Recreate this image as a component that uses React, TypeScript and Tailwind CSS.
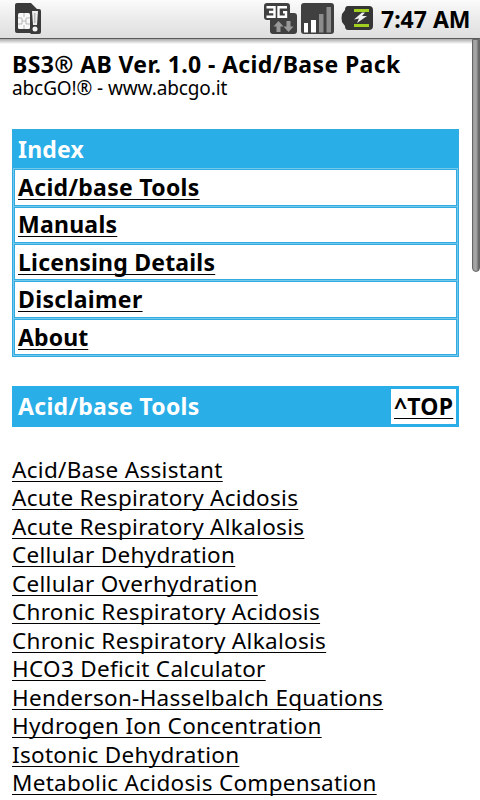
interface LinkItem {
  label: string
  className: string
}

const indexLinks: LinkItem[] = [
  { label: 'Acid/base Tools', className: 'h-[37px] leading-[35px] tracking-[0.3px]' },
  { label: 'Manuals', className: 'h-[36px] leading-[33px] tracking-[0.25px]' },
  { label: 'Licensing Details', className: 'h-[36px] leading-[35px] tracking-[0.2px]' },
  { label: 'Disclaimer', className: 'h-[37px] leading-[35px] tracking-[0.35px]' },
  { label: 'About', className: 'h-[36px] leading-[35px] tracking-[0.1px]' },
]

const toolLinks: string[] = [
  'Acid/Base Assistant',
  'Acute Respiratory Acidosis',
  'Acute Respiratory Alkalosis',
  'Cellular Dehydration',
  'Cellular Overhydration',
  'Chronic Respiratory Acidosis',
  'Chronic Respiratory Alkalosis',
  'HCO3 Deficit Calculator',
  'Henderson-Hasselbalch Equations',
  'Hydrogen Ion Concentration',
  'Isotonic Dehydration',
  'Metabolic Acidosis Compensation',
]

const underline = 'whitespace-nowrap underline decoration-1 underline-offset-[3px] [text-decoration-skip-ink:none]'

function SimIcon() {
  return (
    <svg width="28" height="36" viewBox="0 0 28 36">
      <path d="M3 3h14l6 6h2q2 0 2 2v21q0 2-2 2H17l-1-1H3q-2 0-2-2V5q0-2 2-2z" fill="#3a3a3a" />
      <rect x="4" y="13" width="12" height="16" rx="1.5" fill="#f8f8f8" />
      <path d="M4 18h4v6H4M16 18h-4v6h4M8 21h4M10 13v4M10 25v4" stroke="#b8b8b8" fill="none" />
      <path d="M18 11h6l-1 14h-4z" fill="#eee" />
      <path d="M20 13h1.500v10H20z" fill="#bbb" />
      <circle cx="21" cy="29" r="2.500" fill="#f4f4f4" />
    </svg>
  )
}

function DataIcon() {
  return (
    <svg className="ml-[222px]" width="33" height="36" viewBox="0 0 33 36">
      <rect x="0" y="3" width="26" height="17" rx="3" fill="#404040" />
      <rect x="6" y="13" width="27" height="21" rx="3" fill="#404040" />
      <path d="M2.500 7.200h8v9.600h-8M5 12h5.500M23 7.200h-8.500v9.600h7.500v-4.500h-3" stroke="#fff" strokeWidth="2.400" fill="none" />
      <path d="M14.500 21l5 5.500h-3V32h-4v-5.500h-3zM24.500 32l-5-5.500h3V21h4v5.500h3z" fill="#999" />
    </svg>
  )
}

function SignalIcon() {
  return (
    <svg className="ml-1" width="33" height="36" viewBox="0 0 33 36">
      <rect x="0" y="3" width="33" height="31" rx="3" fill="#404040" />
      <path d="M3 23h4v9.500H3zM10 20h5v12.500h-5z" fill="#fff" />
      <path d="M18 14h4.500v18.500H18zM25.500 7H30v25.500h-4.500z" fill="#8c8c8c" />
    </svg>
  )
}

function BatteryIcon() {
  return (
    <svg className="ml-[7px]" width="32" height="36" viewBox="0 0 32 36">
      <path d="M7 6h21q4 0 4 4v16q0 4-4 4H7q-3 0-3-4l-3-4q-1-4 0-8l3-4q0-4 3-4z" fill="#353535" />
      <path d="M13 9h15v3H13zM13 24h15v3H13z" fill="#a0cf20" />
      <path d="M21 12.500l-8 7 5-1-2 4.500 10-7h-5l3-3.500z" fill="#f0f0f0" />
    </svg>
  )
}

function StatusBar() {
  return (
    <header className="flex h-[38px] items-start bg-linear-to-b from-[#fbfbfb] via-[#ebebeb] to-[#dfdfdf] pl-[14px]">
      <SimIcon />
      <DataIcon />
      <SignalIcon />
      <BatteryIcon />
      <span className="ml-2 text-[23px] leading-[39px] font-bold whitespace-nowrap">7:47 AM</span>
    </header>
  )
}

export default function App() {
  return (
    <div className="relative h-[800px] w-[480px] overflow-hidden bg-white font-['Noto_Sans',sans-serif] text-black">
      <StatusBar />
      <div className="h-px bg-[#5a5a5a]" />
      <div className="h-[5px] bg-linear-to-b from-[#aaa] to-white" />

      <main className="pl-3">
        <h1 className="pt-[6px] text-[23px] leading-[28px] font-bold tracking-[0.38px] whitespace-nowrap">
          BS3® AB Ver. 1.0 - Acid/Base Pack
        </h1>
        <p className="text-[19px] leading-[20px] tracking-[-0.11px]">abcGO!® - www.abcgo.it</p>

        <section className="mt-[31px] flex w-[447px] flex-col gap-px border border-[#32abe0] bg-[#74c8ee] px-px pb-px text-[23px] font-bold">
          <h2 className="-mx-px h-[38px] bg-[#29aee8] pl-[5px] leading-[39px] tracking-[0.2px] text-white">Index</h2>
          {indexLinks.map((item) => (
            <div key={item.label} className={`border border-[#32abe0] bg-white pl-[3px] ${item.className}`}>
              <a className={underline}>{item.label}</a>
            </div>
          ))}
        </section>

        <section className="mt-[29px] flex h-[41px] w-[447px] items-center justify-between bg-[#29aee8] px-[3px] text-[23px] font-bold">
          <h2 className="pl-[3px] tracking-[0.3px] text-white">Acid/base Tools</h2>
          <div className="h-[35px] w-[65px] bg-white pl-[3px] leading-[35px] tracking-[0.2px]">
            <a className={underline}>^TOP</a>
          </div>
        </section>

        <ul className="mt-[28.9px] text-[22.5px] leading-[28.5px] tracking-[0.3px]">
          {toolLinks.map((label) => (
            <li key={label} className="h-[28.5px]">
              <a className={underline}>{label}</a>
            </li>
          ))}
        </ul>
      </main>

      {/* scroll thumb */}
      <div className="absolute top-[39px] right-0 h-[233px] w-2 rounded-b-full border border-[#666] bg-linear-to-r from-[#999] via-[#aaa] to-[#606060]" />
    </div>
  )
}
